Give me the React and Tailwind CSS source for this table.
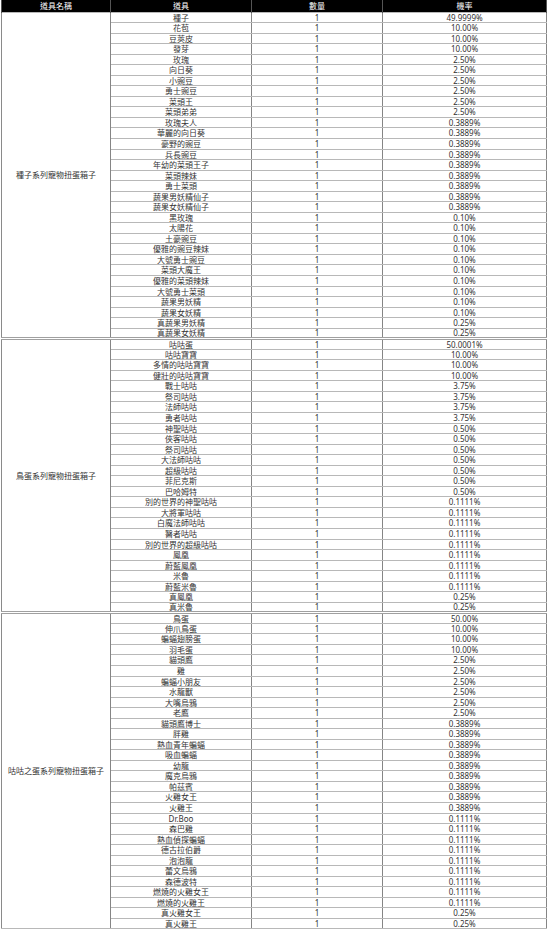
import React from 'react';

const GROUPS = [
  {
    name: '種子系列寵物扭蛋箱子',
    items: [
      ['種子', '49.9999%'],
      ['花苞', '10.00%'],
      ['豆莢皮', '10.00%'],
      ['發芽', '10.00%'],
      ['玫瑰', '2.50%'],
      ['向日葵', '2.50%'],
      ['小豌豆', '2.50%'],
      ['勇士豌豆', '2.50%'],
      ['菜頭王', '2.50%'],
      ['菜頭弟弟', '2.50%'],
      ['玫瑰夫人', '0.3889%'],
      ['華麗的向日葵', '0.3889%'],
      ['豪野的豌豆', '0.3889%'],
      ['兵長豌豆', '0.3889%'],
      ['年幼的菜頭王子', '0.3889%'],
      ['菜頭辣妹', '0.3889%'],
      ['勇士菜頭', '0.3889%'],
      ['蔬果男妖精仙子', '0.3889%'],
      ['蔬果女妖精仙子', '0.3889%'],
      ['黑玫瑰', '0.10%'],
      ['太陽花', '0.10%'],
      ['土豪豌豆', '0.10%'],
      ['優雅的豌豆辣妹', '0.10%'],
      ['大號勇士豌豆', '0.10%'],
      ['菜頭大魔王', '0.10%'],
      ['優雅的菜頭辣妹', '0.10%'],
      ['大號勇士菜頭', '0.10%'],
      ['蔬果男妖精', '0.10%'],
      ['蔬果女妖精', '0.10%'],
      ['真蔬果男妖精', '0.25%'],
      ['真蔬果女妖精', '0.25%'],
    ],
  },
  {
    name: '鳥蛋系列寵物扭蛋箱子',
    items: [
      ['咕咕蛋', '50.0001%'],
      ['咕咕寶寶', '10.00%'],
      ['多情的咕咕寶寶', '10.00%'],
      ['健壯的咕咕寶寶', '10.00%'],
      ['戰士咕咕', '3.75%'],
      ['祭司咕咕', '3.75%'],
      ['法師咕咕', '3.75%'],
      ['勇者咕咕', '3.75%'],
      ['神聖咕咕', '0.50%'],
      ['俠客咕咕', '0.50%'],
      ['祭司咕咕', '0.50%'],
      ['大法師咕咕', '0.50%'],
      ['超級咕咕', '0.50%'],
      ['菲尼克斯', '0.50%'],
      ['巴哈姆特', '0.50%'],
      ['別的世界的神聖咕咕', '0.1111%'],
      ['大將軍咕咕', '0.1111%'],
      ['白魔法師咕咕', '0.1111%'],
      ['醫者咕咕', '0.1111%'],
      ['別的世界的超級咕咕', '0.1111%'],
      ['鳳凰', '0.1111%'],
      ['蔚藍鳳凰', '0.1111%'],
      ['米魯', '0.1111%'],
      ['蔚藍米魯', '0.1111%'],
      ['真鳳凰', '0.25%'],
      ['真米魯', '0.25%'],
    ],
  },
  {
    name: '咕咕之蛋系列寵物扭蛋箱子',
    items: [
      ['鳥蛋', '50.00%'],
      ['伸爪鳥蛋', '10.00%'],
      ['蝙蝠翅膀蛋', '10.00%'],
      ['羽毛蛋', '10.00%'],
      ['貓頭鷹', '2.50%'],
      ['雞', '2.50%'],
      ['蝙蝠小朋友', '2.50%'],
      ['水龍獸', '2.50%'],
      ['大嘴烏鴉', '2.50%'],
      ['老鷹', '2.50%'],
      ['貓頭鷹博士', '0.3889%'],
      ['胖雞', '0.3889%'],
      ['熱血青年蝙蝠', '0.3889%'],
      ['吸血蝙蝠', '0.3889%'],
      ['幼龍', '0.3889%'],
      ['魔克烏鴉', '0.3889%'],
      ['帕茲賓', '0.3889%'],
      ['火雞女王', '0.3889%'],
      ['火雞王', '0.3889%'],
      ['Dr.Boo', '0.1111%'],
      ['森巴雞', '0.1111%'],
      ['熱血偵探蝙蝠', '0.1111%'],
      ['德古拉伯爵', '0.1111%'],
      ['泡泡龍', '0.1111%'],
      ['蕾文烏鴉', '0.1111%'],
      ['森德波特', '0.1111%'],
      ['燃燒的火雞女王', '0.1111%'],
      ['燃燒的火雞王', '0.1111%'],
      ['真火雞女王', '0.25%'],
      ['真火雞王', '0.25%'],
    ],
  },
];

const ROW_H = 10.54;

// rows are laid out on whole pixels, so mix 10px and 11px rows to hit the average
const rowClass = (k) => {
  const h = Math.floor((k + 1) * ROW_H) - Math.floor(k * ROW_H);
  return h > 10 ? 'h-[11px]' : 'h-[10px]';
};

const cell = 'p-0 leading-[8px] text-center align-middle border border-y-[#b8b8b8] border-x-[#858585] whitespace-nowrap overflow-hidden';

export default function App() {
  let k = 0;
  return (
    <div className="w-[548px] h-[931px] bg-white overflow-hidden text-[#333] text-[8px] font-['Noto_Sans','Noto_Sans_CJK_TC',sans-serif]">
      <table className="table-fixed border-collapse w-[545px] ml-[1px]">
        <colgroup>
          <col className="w-[109px]" />
          <col className="w-[141px]" />
          <col className="w-[131px]" />
          <col className="w-[164px]" />
        </colgroup>
        <thead>
          <tr className="bg-black text-white">
            {['道具名稱', '道具', '數量', '機率'].map(h => (
              <th key={h} className="p-0 h-[12px] leading-[12px] font-normal text-center border-x border-x-[#555] border-y-0">{h}</th>
            ))}
          </tr>
        </thead>
        <tbody>
          {GROUPS.map((group, gi) => (
            group.items.map(([item, rate], i) => {
              const sep = gi > 0 && i === 0 ? 'border-t-[3px] border-t-[#a0a0a0] border-double' : '';
              const h = rowClass(k++);
              return (
                <tr key={`${gi}-${i}`}>
                  {i === 0 && (
                    <td rowSpan={group.items.length} className={`${cell} ${sep} border-l-[#8a8a8a]`}>{group.name}</td>
                  )}
                  <td className={`${cell} ${h} ${sep}`}>{item}</td>
                  <td className={`${cell} ${h} ${sep}`}>1</td>
                  <td className={`${cell} ${h} ${sep}`}>{rate}</td>
                </tr>
              );
            })
          ))}
        </tbody>
      </table>
    </div>
  );
}
